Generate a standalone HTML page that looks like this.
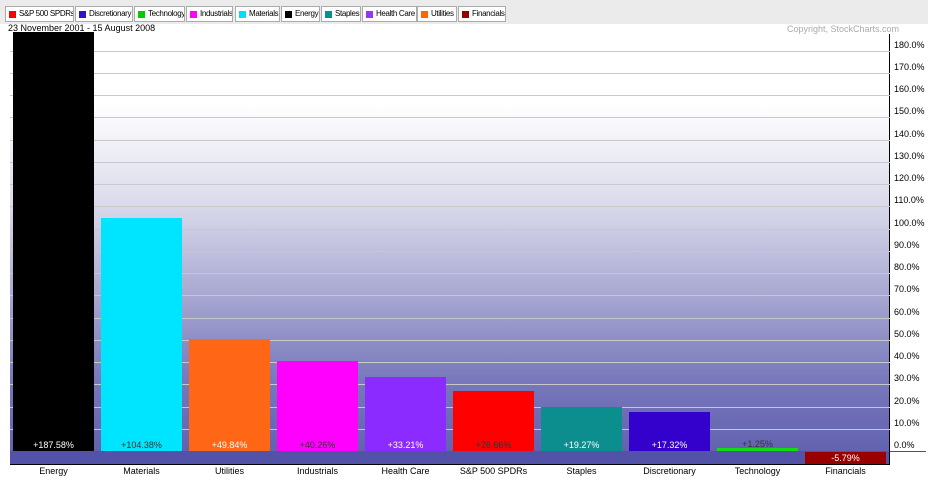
<!DOCTYPE html>
<html><head><meta charset="utf-8"><style>
body{margin:0;width:928px;height:480px;background:#fff;position:relative;overflow:hidden;font-family:"Liberation Sans",Arial,sans-serif;}
.a{position:absolute}
.hdr{left:0;top:0;width:928px;height:24px;background:#ebebeb;}
.btn{position:absolute;top:6px;height:16px;border:1px solid #aaa;background:#fff;font-size:8px;line-height:14px;padding:0 0 0 13px;box-sizing:border-box;color:#000;white-space:nowrap;letter-spacing:-0.35px;overflow:hidden}
.btn i{position:absolute;left:3px;top:4px;width:7px;height:7px}
.g{position:absolute;left:10px;width:880px;height:1px;background:#c8c8c8}
.yl{position:absolute;left:894px;font-size:9px;color:#000}
.bar{position:absolute;width:81px}
.bl{position:absolute;width:81px;text-align:center;font-size:9px;top:440px}
.xl{position:absolute;width:81px;text-align:center;font-size:9px;top:466px;color:#000}
</style></head><body>
<div class="a hdr"></div>
<div class="btn" style="left:5px;width:69px"><i style="background:#f00"></i>S&amp;P 500 SPDRs</div>
<div class="btn" style="left:75px;width:58px"><i style="background:#3311cc"></i>Discretionary</div>
<div class="btn" style="left:134px;width:51px"><i style="background:#0c0"></i>Technology</div>
<div class="btn" style="left:186px;width:47px"><i style="background:#f0f"></i>Industrials</div>
<div class="btn" style="left:235px;width:45px"><i style="background:#0df"></i>Materials</div>
<div class="btn" style="left:281px;width:39px"><i style="background:#000"></i>Energy</div>
<div class="btn" style="left:321px;width:40px"><i style="background:#089090"></i>Staples</div>
<div class="btn" style="left:362px;width:55px"><i style="background:#9933ff"></i>Health Care</div>
<div class="btn" style="left:417px;width:40px"><i style="background:#f60"></i>Utilities</div>
<div class="btn" style="left:458px;width:48px"><i style="background:#990000"></i>Financials</div>
<div class="a" style="left:0;top:24px;width:928px;height:10px;background:#fff"></div>
<div class="a" style="left:8px;top:23px;font-size:9px">23 November 2001 - 15 August 2008</div>
<div class="a" style="left:787px;top:24px;font-size:9px;color:#aaa">Copyright, StockCharts.com</div>
<div class="a" style="left:10px;top:34px;width:880px;height:417px;background:linear-gradient(#fff 0px,#fff 70px,#dcdcec 166px,#a5a5d0 266px,#7878bc 346px,#6262b0 417px)"></div>
<div class="a" style="left:10px;top:451px;width:880px;height:13px;background:#5252a8"></div>
<div class="a" style="left:10px;top:464px;width:880px;height:1px;background:#000"></div>
<div class="a" style="left:889px;top:34px;width:1px;height:431px;background:#000"></div>
<div class="a" style="left:890px;top:451px;width:36px;height:1px;background:#555"></div>
<div class="g" style="top:51px"></div><div class="g" style="top:73px"></div><div class="g" style="top:95px"></div><div class="g" style="top:117px"></div><div class="g" style="top:140px"></div><div class="g" style="top:162px"></div><div class="g" style="top:184px"></div><div class="g" style="top:206px"></div><div class="g" style="top:229px"></div><div class="g" style="top:251px"></div><div class="g" style="top:273px"></div><div class="g" style="top:295px"></div><div class="g" style="top:318px"></div><div class="g" style="top:340px"></div><div class="g" style="top:362px"></div><div class="g" style="top:384px"></div><div class="g" style="top:407px"></div><div class="g" style="top:429px"></div>
<div class="yl" style="top:40px">180.0%</div><div class="yl" style="top:62px">170.0%</div><div class="yl" style="top:84px">160.0%</div><div class="yl" style="top:106px">150.0%</div><div class="yl" style="top:129px">140.0%</div><div class="yl" style="top:151px">130.0%</div><div class="yl" style="top:173px">120.0%</div><div class="yl" style="top:195px">110.0%</div><div class="yl" style="top:218px">100.0%</div><div class="yl" style="top:240px">90.0%</div><div class="yl" style="top:262px">80.0%</div><div class="yl" style="top:284px">70.0%</div><div class="yl" style="top:307px">60.0%</div><div class="yl" style="top:329px">50.0%</div><div class="yl" style="top:351px">40.0%</div><div class="yl" style="top:373px">30.0%</div><div class="yl" style="top:396px">20.0%</div><div class="yl" style="top:418px">10.0%</div><div class="yl" style="top:440px">0.0%</div>
<div class="bar" style="left:13px;top:32px;height:419px;background:#000"></div>
<div class="bar" style="left:101px;top:218px;height:233px;background:#00e5ff"></div>
<div class="bar" style="left:189px;top:339px;height:112px;background:#ff6616"></div>
<div class="bar" style="left:277px;top:361px;height:90px;background:#ff00ff"></div>
<div class="bar" style="left:365px;top:377px;height:74px;background:#8c2bff"></div>
<div class="bar" style="left:453px;top:391px;height:60px;background:#ff0000"></div>
<div class="bar" style="left:541px;top:407px;height:44px;background:#0c8e8e"></div>
<div class="bar" style="left:629px;top:412px;height:39px;background:#3300cc"></div>
<div class="bar" style="left:717px;top:448px;height:3px;background:#11dd11"></div>
<div class="bar" style="left:805px;top:452px;height:12px;background:#990000"></div>
<div class="bl" style="left:13px;color:#fff">+187.58%</div>
<div class="bl" style="left:101px;color:#333">+104.38%</div>
<div class="bl" style="left:189px;color:#fff">+49.84%</div>
<div class="bl" style="left:277px;color:#333">+40.26%</div>
<div class="bl" style="left:365px;color:#fff">+33.21%</div>
<div class="bl" style="left:453px;color:#333">+26.66%</div>
<div class="bl" style="left:541px;color:#fff">+19.27%</div>
<div class="bl" style="left:629px;color:#fff">+17.32%</div>
<div class="bl" style="left:717px;color:#333;top:439px">+1.25%</div>
<div class="bl" style="left:805px;color:#fff;top:453px">-5.79%</div>
<div class="xl" style="left:13px">Energy</div>
<div class="xl" style="left:101px">Materials</div>
<div class="xl" style="left:189px">Utilities</div>
<div class="xl" style="left:277px">Industrials</div>
<div class="xl" style="left:365px">Health Care</div>
<div class="xl" style="left:453px">S&amp;P 500 SPDRs</div>
<div class="xl" style="left:541px">Staples</div>
<div class="xl" style="left:629px">Discretionary</div>
<div class="xl" style="left:717px">Technology</div>
<div class="xl" style="left:805px">Financials</div>
</body></html>
